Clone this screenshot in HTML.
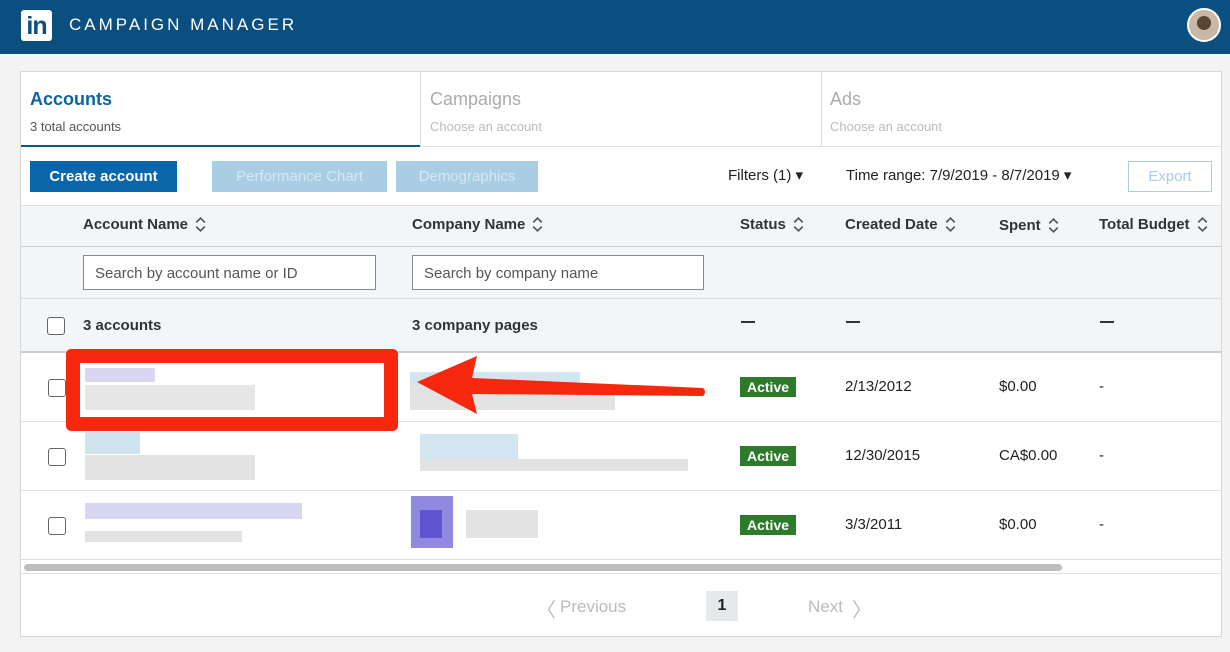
<!DOCTYPE html><html><head><style>
*{box-sizing:border-box;margin:0;padding:0}
body{width:1230px;height:652px;background:#f3f3f3;font-family:"Liberation Sans",sans-serif;position:relative;overflow:hidden;color:#222}
.a{position:absolute}
.hdr{left:0;top:0;width:1230px;height:54px;background:#0a4f80}
.card{left:20px;top:71px;width:1202px;height:566px;background:#fff;border:1px solid #d6d6d6}
.t{font-size:15px}
.cb{width:18px;height:18px;border:1.5px solid #666;border-radius:3px;background:#fff}
.pill{background:#2d7a2b;color:#fff;font-size:14px;font-weight:bold;padding:2px 7px}
.blur{background:#e3e3e3}
.btn{font-size:15px;color:#fff;text-align:center;line-height:31px}
.h{font-size:15px;font-weight:bold;color:#333;display:flex;align-items:center}
.h svg{margin-left:7px}
</style></head><body>
<div class="a hdr"></div>
<div class="a" style="left:21px;top:10px;width:31px;height:31px;background:#fff;border-radius:3px;color:#0a4f80;font-weight:bold;font-size:25px;line-height:32px;text-align:center;letter-spacing:-1px">in</div>
<div class="a" style="left:69px;top:15px;color:#fff;font-size:17px;letter-spacing:3px">CAMPAIGN MANAGER</div>
<div class="a" style="left:1187px;top:8px;width:34px;height:34px;border-radius:50%;background:#c9b8a8;border:2px solid #fff"><div style="margin:6px auto;width:14px;height:14px;border-radius:50%;background:#5a4535"></div></div>
<div class="a card"></div>
<div class="a" style="left:420px;top:72px;width:1px;height:75px;background:#ddd"></div>
<div class="a" style="left:821px;top:72px;width:1px;height:75px;background:#ddd"></div>
<div class="a" style="left:21px;top:146px;width:1200px;height:1px;background:#ddd"></div>
<div class="a" style="left:21px;top:145px;width:399px;height:2px;background:#0a5a86"></div>
<div class="a" style="left:30px;top:89px;font-size:18px;color:#0a66a0;font-weight:bold">Accounts</div>
<div class="a" style="left:30px;top:119px;font-size:13px;color:#555">3 total accounts</div>
<div class="a" style="left:430px;top:89px;font-size:18px;color:#aaa">Campaigns</div>
<div class="a" style="left:430px;top:119px;font-size:13px;color:#bbb">Choose an account</div>
<div class="a" style="left:830px;top:89px;font-size:18px;color:#aaa">Ads</div>
<div class="a" style="left:830px;top:119px;font-size:13px;color:#bbb">Choose an account</div>
<div class="a btn" style="left:30px;top:161px;width:147px;height:31px;background:#0a66a8;font-weight:bold">Create account</div>
<div class="a btn" style="left:212px;top:161px;width:175px;height:31px;background:#a9cde3;color:#d6e8f3">Performance Chart</div>
<div class="a btn" style="left:396px;top:161px;width:142px;height:31px;background:#a9cde3;color:#d6e8f3">Demographics</div>
<div class="a t" style="left:728px;top:166px">Filters (1) ▾</div>
<div class="a t" style="left:846px;top:166px">Time range: 7/9/2019 - 8/7/2019 ▾</div>
<div class="a" style="left:1128px;top:161px;width:84px;height:31px;border:1px solid #a9cde3;color:#a9cde3;font-size:15px;text-align:center;line-height:29px">Export</div>
<div class="a" style="left:21px;top:205px;width:1200px;height:147px;background:#f3f6f8;border-top:1px solid #ddd"></div>
<div class="a" style="left:21px;top:246px;width:1200px;height:1px;background:#ccc"></div>
<div class="a" style="left:21px;top:298px;width:1200px;height:1px;background:#ddd"></div>
<div class="a" style="left:21px;top:351px;width:1200px;height:2px;background:#ccc"></div>
<svg width="0" height="0" style="position:absolute"><defs><symbol id="s" viewBox="0 0 10 16"><path d="M1 6 L5 2 L9 6 M1 10 L5 14 L9 10" fill="none" stroke="#555" stroke-width="1.5"/></symbol></defs></svg>
<div class="a h" style="left:83px;top:216px">Account Name<svg width="11" height="17"><use href="#s"/></svg></div>
<div class="a h" style="left:412px;top:216px">Company Name<svg width="11" height="17"><use href="#s"/></svg></div>
<div class="a h" style="left:740px;top:216px">Status<svg width="11" height="17"><use href="#s"/></svg></div>
<div class="a h" style="left:845px;top:216px">Created Date<svg width="11" height="17"><use href="#s"/></svg></div>
<div class="a h" style="left:999px;top:217px">Spent<svg width="11" height="17"><use href="#s"/></svg></div>
<div class="a h" style="left:1099px;top:216px">Total Budget<svg width="11" height="17"><use href="#s"/></svg></div>
<div class="a" style="left:83px;top:255px;width:293px;height:35px;background:#fff;border:1px solid #888;font-size:15px;color:#555;padding:9px 11px">Search by account name or ID</div>
<div class="a" style="left:412px;top:255px;width:292px;height:35px;background:#fff;border:1px solid #888;font-size:15px;color:#555;padding:9px 11px">Search by company name</div>
<div class="a cb" style="left:47px;top:317px"></div>
<div class="a t" style="left:83px;top:317px;font-weight:bold;color:#333">3 accounts</div>
<div class="a t" style="left:412px;top:317px;font-weight:bold;color:#333">3 company pages</div>
<div class="a" style="left:741px;top:321px;width:14px;height:2px;background:#333"></div>
<div class="a" style="left:846px;top:321px;width:14px;height:2px;background:#333"></div>
<div class="a" style="left:1100px;top:321px;width:14px;height:2px;background:#333"></div>
<div class="a" style="left:21px;top:421px;width:1200px;height:1px;background:#ddd"></div>
<div class="a" style="left:21px;top:490px;width:1200px;height:1px;background:#ddd"></div>
<div class="a" style="left:21px;top:559px;width:1200px;height:1px;background:#ddd"></div>
<div class="a cb" style="left:48px;top:379px"></div>
<div class="a cb" style="left:48px;top:448px"></div>
<div class="a cb" style="left:48px;top:517px"></div>
<div class="a pill" style="left:740px;top:377px">Active</div>
<div class="a pill" style="left:740px;top:446px">Active</div>
<div class="a pill" style="left:740px;top:515px">Active</div>
<div class="a t" style="left:845px;top:378px">2/13/2012</div>
<div class="a t" style="left:845px;top:447px">12/30/2015</div>
<div class="a t" style="left:845px;top:516px">3/3/2011</div>
<div class="a t" style="left:999px;top:378px">$0.00</div>
<div class="a t" style="left:999px;top:447px">CA$0.00</div>
<div class="a t" style="left:999px;top:516px">$0.00</div>
<div class="a t" style="left:1099px;top:378px">-</div>
<div class="a t" style="left:1099px;top:447px">-</div>
<div class="a t" style="left:1099px;top:516px">-</div>
<div class="a" style="left:85px;top:368px;width:70px;height:14px;background:#d8d6f2"></div>
<div class="a blur" style="left:85px;top:385px;width:170px;height:25px;background:#e6e6e6"></div>
<div class="a" style="left:85px;top:432px;width:55px;height:22px;background:#cfe3ef"></div>
<div class="a blur" style="left:85px;top:455px;width:170px;height:25px"></div>
<div class="a" style="left:85px;top:503px;width:217px;height:16px;background:#d8d6f2"></div>
<div class="a blur" style="left:85px;top:531px;width:157px;height:11px"></div>
<div class="a" style="left:410px;top:372px;width:170px;height:13px;background:#d3e5ef"></div>
<div class="a blur" style="left:410px;top:385px;width:205px;height:25px"></div>
<div class="a" style="left:420px;top:434px;width:98px;height:25px;background:#d3e5ef"></div>
<div class="a blur" style="left:420px;top:459px;width:268px;height:12px"></div>
<div class="a" style="left:411px;top:496px;width:42px;height:52px;background:#8f8ae0"></div>
<div class="a" style="left:420px;top:510px;width:22px;height:28px;background:#5e55d0"></div>
<div class="a blur" style="left:466px;top:510px;width:72px;height:28px"></div>
<div class="a" style="left:66px;top:349px;width:332px;height:82px;border:14px solid #f5270c;border-radius:5px"></div>
<svg class="a" style="left:415px;top:350px" width="295" height="70" viewBox="0 0 295 70"><path d="M2 32 L62 6 L57 28 L288 38 Q292 42 288 46 L57 44 L62 64 Z" fill="#f5270c"/></svg>
<div class="a" style="left:24px;top:564px;width:1038px;height:7px;background:#bdbdbd;border-radius:4px"></div>
<div class="a" style="left:21px;top:573px;width:1200px;height:1px;background:#ddd"></div>
<div class="a" style="left:536px;top:594px;font-size:20px;color:#bbb">〈</div>
<div class="a" style="left:560px;top:597px;font-size:17px;color:#bbb">Previous</div>
<div class="a" style="left:706px;top:591px;width:32px;height:30px;background:#e6e9ec;font-size:16px;font-weight:bold;text-align:center;line-height:30px">1</div>
<div class="a" style="left:808px;top:597px;font-size:17px;color:#bbb">Next</div>
<div class="a" style="left:852px;top:594px;font-size:20px;color:#bbb">〉</div>
</body></html>
